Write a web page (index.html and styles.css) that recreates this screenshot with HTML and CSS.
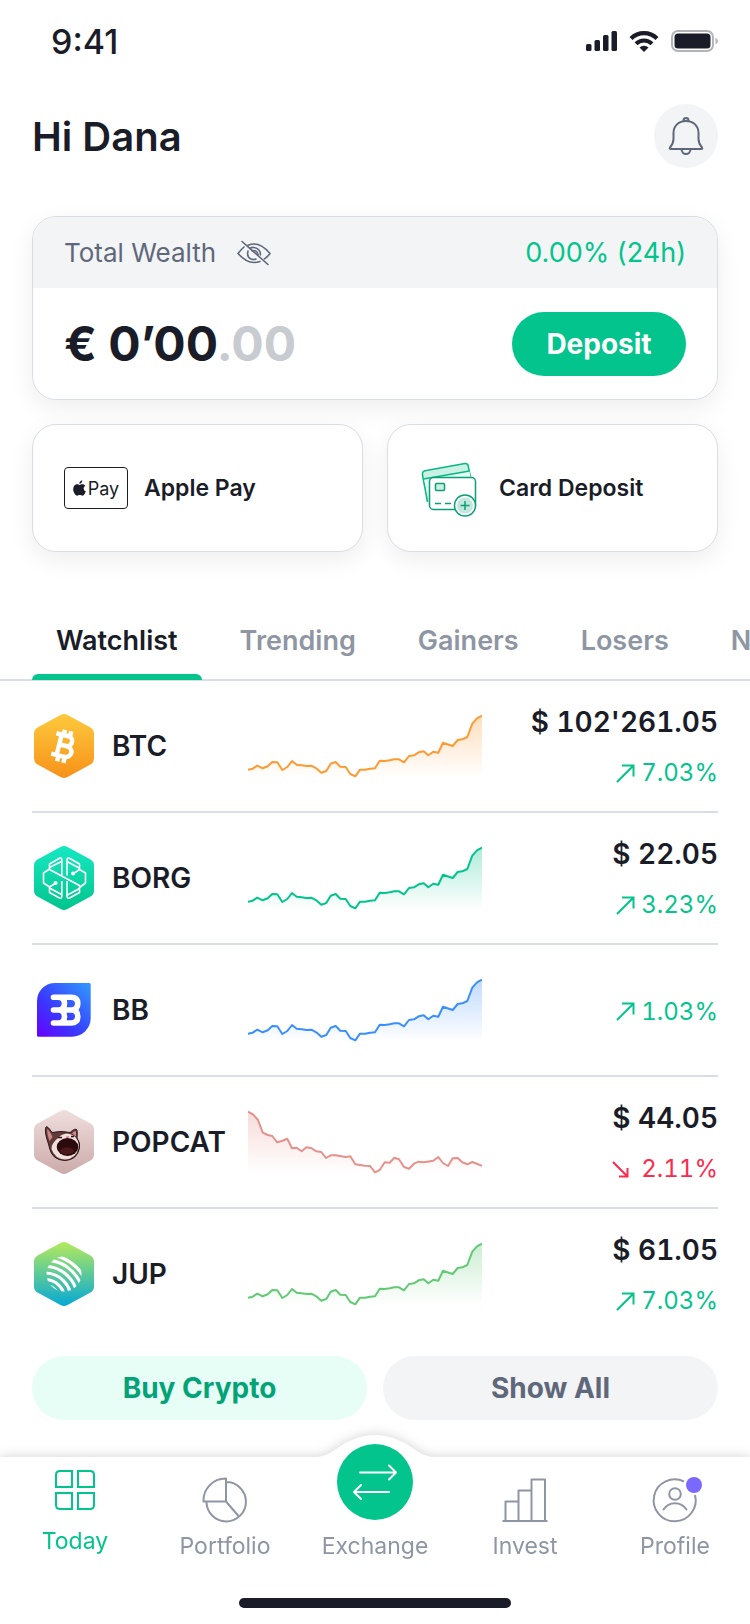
FILE: index.html
```
<!DOCTYPE html>
<html lang="en">
<head>
    <meta charset="UTF-8">
    <meta name="viewport" content="width=device-width, initial-scale=1.0">
    <title>Today</title>
    <link rel="stylesheet" href="styles.css">
</head>
<body>
    <!-- shared shapes -->
    <svg class="defs" width="0" height="0" aria-hidden="true">
        <defs>
            <path id="hex" d="M28.5 1Q32 -1 35.5 1L58.5 13.5Q62 15.5 62 19.5V44.5Q62 48.5 58.5 50.5L35.5 63Q32 65 28.5 63L5.5 50.5Q2 48.5 2 44.5V19.5Q2 15.5 5.5 13.5Z"/>
            <path id="rise-line" d="M0 55.7L4.7 54.7L9.3 51.7L14.7 54.3L19.7 52.3L24.3 48L29.3 48.3L34.3 56L39.3 53L44 47L48.7 50.7L53.7 51.3L58.3 52L63.3 51.7L68.3 54.3L73.3 58.7L78.3 57L82.7 49.7L87.7 48L92.3 52.7L97.7 53L102.3 60L107.3 62.3L112 55.7L117 55.7L122 54.7L127 54.3L131.7 46.7L136.7 47L141.7 46.3L146.3 45.3L151 45.3L156 48.3L161 42L166 41.3L170.7 38.3L175.7 37.3L180.3 41.3L185.3 37.7L190.3 38.7L195 28.7L204.7 32L209.7 26L214.3 25.3L219.3 23L224.3 9.7L229 4.3L234 1.7"/>
            <path id="rise-area" d="M0 55.7L4.7 54.7L9.3 51.7L14.7 54.3L19.7 52.3L24.3 48L29.3 48.3L34.3 56L39.3 53L44 47L48.7 50.7L53.7 51.3L58.3 52L63.3 51.7L68.3 54.3L73.3 58.7L78.3 57L82.7 49.7L87.7 48L92.3 52.7L97.7 53L102.3 60L107.3 62.3L112 55.7L117 55.7L122 54.7L127 54.3L131.7 46.7L136.7 47L141.7 46.3L146.3 45.3L151 45.3L156 48.3L161 42L166 41.3L170.7 38.3L175.7 37.3L180.3 41.3L185.3 37.7L190.3 38.7L195 28.7L204.7 32L209.7 26L214.3 25.3L219.3 23L224.3 9.7L229 4.3L234 1.7V64H0Z"/>
            <path id="arrow-up" d="M1 18L17 2M6 1.500H17.500V12.500"/>
            <linearGradient id="g-btc" x1="0" y1="0" x2="0" y2="1"><stop offset="0" stop-color="#fdc93c"/><stop offset="1" stop-color="#f7921a"/></linearGradient>
            <linearGradient id="g-borg" x1="0" y1="0" x2="0" y2="1"><stop offset="0" stop-color="#16e8c3"/><stop offset="1" stop-color="#03c48c"/></linearGradient>
            <linearGradient id="g-bb" x1="0" y1="1" x2="1" y2="0"><stop offset="0" stop-color="#6800ff"/><stop offset=".4" stop-color="#3a37ff"/><stop offset="1" stop-color="#2f9bff"/></linearGradient>
            <linearGradient id="g-cat" x1="0" y1="0" x2="0" y2="1"><stop offset="0" stop-color="#efdedd"/><stop offset="1" stop-color="#cbabaa"/></linearGradient>
            <linearGradient id="g-jup" x1="0" y1="0" x2="0" y2="1"><stop offset="0" stop-color="#b5ea5b"/><stop offset="1" stop-color="#05a9d6"/></linearGradient>
            <linearGradient id="f-orange" x1="0" y1="0" x2="0" y2="1"><stop offset="0" stop-color="#ff9a32" stop-opacity=".32"/><stop offset="1" stop-color="#ff9a32" stop-opacity="0"/></linearGradient>
            <linearGradient id="f-green" x1="0" y1="0" x2="0" y2="1"><stop offset="0" stop-color="#03c48c" stop-opacity=".32"/><stop offset="1" stop-color="#03c48c" stop-opacity="0"/></linearGradient>
            <linearGradient id="f-blue" x1="0" y1="0" x2="0" y2="1"><stop offset="0" stop-color="#3a8fff" stop-opacity=".32"/><stop offset="1" stop-color="#3a8fff" stop-opacity="0"/></linearGradient>
            <linearGradient id="f-rose" x1="0" y1="0" x2="0" y2="1"><stop offset="0" stop-color="#e5918c" stop-opacity=".32"/><stop offset="1" stop-color="#e5918c" stop-opacity="0"/></linearGradient>
            <linearGradient id="f-lime" x1="0" y1="0" x2="0" y2="1"><stop offset="0" stop-color="#62c974" stop-opacity=".32"/><stop offset="1" stop-color="#62c974" stop-opacity="0"/></linearGradient>
            <clipPath id="jup-clip"><circle cx="32" cy="32" r="17.500"/></clipPath>
        </defs>
    </svg>

    <div class="app">
        <div class="status-bar">
            <span class="time">9:41</span>
            <div class="status-icons">
                <svg width="31" height="20" viewBox="0 0 31 20" fill="#1a1d28">
                    <rect x="0" y="13" width="5.500" height="7" rx="1.500"/>
                    <rect x="8.500" y="9" width="5.500" height="11" rx="1.500"/>
                    <rect x="17" y="4" width="5.500" height="16" rx="1.500"/>
                    <rect x="25.500" y="0" width="5.500" height="20" rx="1.500"/>
                </svg>
                <svg width="30" height="21" viewBox="0 0 30 21">
                    <path d="M2 7.500A18.500 18.500 0 0 1 28 7.500" fill="none" stroke="#1a1d28" stroke-width="4.200"/>
                    <path d="M7 12.800A11.500 11.500 0 0 1 23 12.800" fill="none" stroke="#1a1d28" stroke-width="4"/>
                    <path d="M15 21L10.500 16.500A6.500 6.500 0 0 1 19.500 16.500Z" fill="#1a1d28"/>
                </svg>
                <svg width="48" height="22" viewBox="0 0 48 22">
                    <rect x="1" y="1" width="41" height="20" rx="6" fill="none" stroke="#b2b3b9" stroke-width="2"/>
                    <rect x="3.500" y="3.500" width="36" height="15" rx="3.500" fill="#1a1d28"/>
                    <path d="M44.500 7.500Q47 9 47 11T44.500 14.500Z" fill="#b2b3b9"/>
                </svg>
            </div>
        </div>

        <header class="header">
            <h1>Hi Dana</h1>
            <button class="bell" aria-label="Notifications">
                <svg width="36" height="38" viewBox="0 0 36 38" fill="none" stroke="#5f687a" stroke-width="2" stroke-linejoin="round">
                    <path d="M15.500 4.500V3.500A2.500 2.500 0 0 1 20.500 3.500V4.500"/>
                    <path d="M18 4C10.500 4 5.500 9 5.500 16V22C5.500 26 4.500 27.500 2 30.500Q1 32 3 32H33Q35 32 34 30.500C31.500 27.500 30.500 26 30.500 22V16C30.500 9 25.500 4 18 4Z"/>
                    <path d="M13.500 32C13.500 38.500 22.500 38.500 22.500 32"/>
                </svg>
            </button>
        </header>

        <section class="wealth">
            <div class="wealth-head">
                <span>Total Wealth</span>
                <button class="eye" aria-label="Show or hide balance">
                    <svg width="34" height="26" viewBox="0 0 34 26" fill="none" stroke="#5f687a" stroke-width="1.600" stroke-linecap="round">
                        <path d="M11 5.200Q14 4 17 4Q25 4 33 13.500Q31 16.500 27.500 18.800M7 7Q4 9.500 1 13.500Q9 22.500 17 22.500Q20 22.500 23 21.500"/>
                        <path d="M13 8.500Q15 7 17 7.500Q23.500 8.500 23.500 15M11 11Q9.500 17 14 19Q17 20 19 19"/>
                        <path d="M15 10.800Q20 9.500 21 14.500"/>
                        <path d="M5 1.500L31 24.500"/>
                    </svg>
                </button>
                <span class="day-change">0.00% (24h)</span>
            </div>
            <div class="wealth-body">
                <div class="balance">€ 0’00<span class="cents">.00</span></div>
                <button class="deposit">Deposit</button>
            </div>
        </section>

        <section class="actions">
            <button class="action">
                <span class="pay-badge">
                    <svg width="13" height="16" viewBox="0 0 13 16" fill="#1a1d28">
                        <path d="M9.300 0.200C9.300 2.200 8 3.700 6.300 3.800C6.200 2 7.600 0.500 9.300 0.200Z"/>
                        <path d="M6.600 4.900C7.400 4.900 8 4.200 9.500 4.200C10.700 4.200 11.700 4.900 12.300 5.700C9.900 7.200 10.300 10.300 12.800 11.300C12.200 13.200 10.900 15.600 9.400 15.700C8.400 15.700 8 15.100 6.800 15.100C5.600 15.100 5.100 15.700 4.200 15.700C2.300 15.700 0.200 12.300 0.200 9.300C0.200 6 2.200 4.300 4 4.300C5.200 4.300 6 4.900 6.600 4.900Z"/>
                    </svg>
                    Pay
                </span>
                <span>Apple Pay</span>
            </button>
            <button class="action">
                <svg width="64" height="60" viewBox="0 -4 64 60" fill="none" stroke="#0b9f78" stroke-width="1.500" stroke-linejoin="round">
                    <path d="M8.500 40L3.500 13Q3 9.500 6 8.800L46 1.500Q48.500 1.200 49.200 3.800L51.500 15" fill="#cdf0e5" stroke="#03b985"/>
                    <path d="M5 17L50.500 9L51.500 15H14Q11 15 10.500 18V40Z" fill="#e6f8f2" stroke="none"/>
                    <path d="M4.500 17L50.500 9" stroke="#03b985"/>
                    <rect x="10.500" y="15.500" width="46" height="32" rx="4" fill="#fff"/>
                    <rect x="16.500" y="21.500" width="9" height="7" rx="1" fill="#cdf0e5"/>
                    <path d="M16 41.500H22M26 41.500H32"/>
                    <circle cx="46" cy="43.500" r="10.500" fill="#fff"/>
                    <circle cx="46" cy="43.500" r="8" fill="#c3e7da" stroke="none"/>
                    <path d="M46 39V48M41.500 43.500H50.500"/>
                </svg>
                <span>Card Deposit</span>
            </button>
        </section>

        <nav class="tabs">
            <a class="tab active" href="#watchlist">Watchlist</a>
            <a class="tab" href="#trending">Trending</a>
            <a class="tab" href="#gainers">Gainers</a>
            <a class="tab" href="#losers">Losers</a>
            <a class="tab" href="#new">New</a>
        </nav>

        <ul class="coins">
            <li class="coin">
                <div class="coin-name">
                    <svg width="64" height="64" viewBox="0 0 64 64">
                        <use href="#hex" fill="url(#g-btc)"/>
                        <path transform="translate(32 32) rotate(14)" fill="none" stroke="#fff" stroke-width="4.500" d="M-10.500 -10.500H2C8.500 -10.500 8.500 -0.500 2 -0.500H-4M2 -0.500C11 -0.500 11 10.500 2 10.500H-10.500M-5 -10.500V10.500M-3 -16V-10M3.500 -16V-10M-3 10V16.500M3.500 10V16.500"/>
                    </svg>
                    BTC
                </div>
                <svg class="chart" viewBox="0 0 234 64"><use href="#rise-area" fill="url(#f-orange)"/><use href="#rise-line" stroke="#ff9a32"/></svg>
                <div class="coin-price">
                    <strong>$ 102'261.05</strong>
                    <span class="up"><svg width="19" height="19" viewBox="0 0 19 19"><use href="#arrow-up"/></svg>7.03%</span>
                </div>
            </li>
            <li class="coin">
                <div class="coin-name">
                    <svg width="64" height="64" viewBox="0 0 64 64">
                        <use href="#hex" fill="url(#g-borg)"/>
                        <g fill="none" stroke="#fff" stroke-width="1.600" stroke-linejoin="round">
                            <path d="M29.800 30V14Q29.800 11 27.500 12.300L17.500 18V23.500L47.500 39.500V46.500L37.500 52Q35 53 35 50V35"/>
                            <path d="M17.500 23L11.500 27V37L17.500 41L23 37.500M17.500 40.500V46.500L27.500 52Q29.800 53 29.800 50V35M17.500 21.500L29.500 15.500"/>
                            <path d="M35 29.500V14Q35 11 37.500 12.300L47.500 18V23.500L53.500 27V37L47.500 41.500M35 15.500L47 22M47.500 23.500L41.500 27.500M29.500 48.500L17.500 42M35.500 49L47.500 42.500"/>
                        </g>
                        <circle cx="23.500" cy="37" r="2" fill="#fff"/>
                        <circle cx="41" cy="27.500" r="2" fill="#fff"/>
                    </svg>
                    BORG
                </div>
                <svg class="chart" viewBox="0 0 234 64"><use href="#rise-area" fill="url(#f-green)"/><use href="#rise-line" stroke="#03c48c"/></svg>
                <div class="coin-price">
                    <strong>$ 22.05</strong>
                    <span class="up"><svg width="19" height="19" viewBox="0 0 19 19"><use href="#arrow-up"/></svg>3.23%</span>
                </div>
            </li>
            <li class="coin">
                <div class="coin-name">
                    <svg width="64" height="64" viewBox="0 0 64 64">
                        <path d="M23 5H57.500Q58.700 5 58.700 6.500V40A18.700 18.700 0 0 1 40 58.700H6.500Q5 58.700 5 57.500V23A18 18 0 0 1 23 5Z" fill="url(#g-bb)"/>
                        <path d="M21.500 19.200H39Q45.800 19.200 45.800 25.500T39.500 32H21.500M39.500 32Q45.800 32 45.800 38.500T39 45H21.500M26.500 19.200Q32.500 19.200 32.500 25.500T26.500 32Q32.500 32 32.500 38.500T26.500 45" fill="none" stroke="#fff" stroke-width="5.600" stroke-linecap="round"/>
                    </svg>
                    BB
                </div>
                <svg class="chart" viewBox="0 0 234 64"><use href="#rise-area" fill="url(#f-blue)"/><use href="#rise-line" stroke="#3a8fff"/></svg>
                <div class="coin-price">
                    <span class="up"><svg width="19" height="19" viewBox="0 0 19 19"><use href="#arrow-up"/></svg>1.03%</span>
                </div>
            </li>
            <li class="coin">
                <div class="coin-name">
                    <svg width="64" height="64" viewBox="0 0 64 64">
                        <use href="#hex" fill="url(#g-cat)"/>
                        <path d="M16.500 34C14 27 12.500 20 14 17Q15.500 15.500 20 22.500Q29 20.500 38 22.500Q43.500 17.500 45 20Q45.500 24 45 28Q48.500 33 47.500 38Q45 50 33 50.500Q20 50 17.500 38Z" fill="#63393a" stroke="#2c1718" stroke-width="1"/>
                        <path d="M15 19Q18 21 20.500 27L17.500 31Q15 24 15 19Z" fill="#cf8686"/>
                        <path d="M40 23.500Q43.500 20 44 21.500V26.500Z" fill="#cf8686"/>
                        <path d="M26 28Q29 24 35 23.500Q41 24 44 28Q47.500 33 46.500 38Q44 49 33 49.500Q23 49 19.500 39Q19 34 26 28Z" fill="#f1dfdc"/>
                        <path d="M26 27.500H30M39 26.500H42" stroke="#241516" stroke-width="1.600"/>
                        <path d="M33.500 27L37 26L36 29Z" fill="#c8706f"/>
                        <ellipse cx="35.500" cy="37" rx="10.800" ry="9" fill="#2a0a0c"/>
                        <ellipse cx="35" cy="41" rx="7" ry="3.500" fill="#4a1a1b"/>
                    </svg>
                    POPCAT
                </div>
                <svg class="chart" viewBox="0 0 234 64">
                    <path fill="url(#f-rose)" d="M0 1.700L5.300 4.700L10 10L14.700 22.700L19.700 25L24.300 26L29.300 32.300L34.300 30.700L39.300 28.700L44 38.300L48.700 37.700L53.700 41.300L58.300 37.300L63.300 38L68.300 41.300L73.300 42L78 48L82.700 45.300L87.700 45.300L97.700 47L102.300 46.300L107.300 54.300L117 55.700L122 56L127 62.300L131.700 60L136.700 52.300L141.700 52.700L146.300 47.700L151 49.300L156 57L161 58.700L166 53.700L170.700 51.700L175.700 52.300L185.300 50.700L190.300 47L195 53L200 56L204.700 48.300L209.700 48L214.300 52.300L219.300 54.300L224.300 52L234 55.700V64H0Z"/>
                    <path stroke="#e5918c" d="M0 1.700L5.300 4.700L10 10L14.700 22.700L19.700 25L24.300 26L29.300 32.300L34.300 30.700L39.300 28.700L44 38.300L48.700 37.700L53.700 41.300L58.300 37.300L63.300 38L68.300 41.300L73.300 42L78 48L82.700 45.300L87.700 45.300L97.700 47L102.300 46.300L107.300 54.300L117 55.700L122 56L127 62.300L131.700 60L136.700 52.300L141.700 52.700L146.300 47.700L151 49.300L156 57L161 58.700L166 53.700L170.700 51.700L175.700 52.300L185.300 50.700L190.300 47L195 53L200 56L204.700 48.300L209.700 48L214.300 52.300L219.300 54.300L224.300 52L234 55.700"/>
                </svg>
                <div class="coin-price">
                    <strong>$ 44.05</strong>
                    <span class="down"><svg width="17" height="17" viewBox="0 0 17 17"><path d="M1 1L15 15M7 15.500H15.500V7"/></svg>2.11%</span>
                </div>
            </li>
            <li class="coin">
                <div class="coin-name">
                    <svg width="64" height="64" viewBox="0 0 64 64">
                        <use href="#hex" fill="url(#g-jup)"/>
                        <g clip-path="url(#jup-clip)" fill="none" stroke="#fff" stroke-width="3.200">
                            <circle cx="13" cy="57" r="13.500"/>
                            <circle cx="13" cy="57" r="19.500"/>
                            <circle cx="13" cy="57" r="26"/>
                            <circle cx="13" cy="57" r="32.500"/>
                            <circle cx="13" cy="57" r="38.800"/>
                            <circle cx="13" cy="57" r="44.600"/>
                        </g>
                    </svg>
                    JUP
                </div>
                <svg class="chart" viewBox="0 0 234 64"><use href="#rise-area" fill="url(#f-lime)"/><use href="#rise-line" stroke="#62c974"/></svg>
                <div class="coin-price">
                    <strong>$ 61.05</strong>
                    <span class="up"><svg width="19" height="19" viewBox="0 0 19 19"><use href="#arrow-up"/></svg>7.03%</span>
                </div>
            </li>
        </ul>

        <div class="buttons">
            <button class="buy">Buy Crypto</button>
            <button class="show-all">Show All</button>
        </div>

        <nav class="bottom-nav">
            <svg class="bump" width="120" height="24" viewBox="0 0 120 24"><path d="M0 22C12 22 19 15 27 10C37 4 48 0 60 0C72 0 83 4 93 10C101 15 108 22 120 22V24H0Z" fill="#fff"/></svg>
            <div class="nav-items">
                <a class="nav-item current" href="#today">
                    <svg width="46" height="40" viewBox="0 0 46 40" fill="none" stroke="currentColor" stroke-width="2">
                        <path d="M20 1V17H4V5Q4 1 8 1ZM26 1H38Q42 1 42 5V17H26ZM4 23H20V39H8Q4 39 4 35ZM26 23H42V35Q42 39 38 39H26Z"/>
                    </svg>
                    Today
                </a>
                <a class="nav-item" href="#portfolio">
                    <svg width="46" height="46" viewBox="0 0 46 46" fill="none" stroke="currentColor" stroke-width="2" stroke-linejoin="round">
                        <path d="M24 1.500V24.500H1.500A22 22 0 0 1 24 1.500ZM24 5A19.700 19.700 0 1 1 4.500 24.500M24 24.500L36.500 39"/>
                    </svg>
                    Portfolio
                </a>
                <a class="nav-item" href="#exchange">
                    <span class="exchange-circle">
                        <svg width="46" height="36" viewBox="0 0 46 36" fill="none" stroke="#fff" stroke-width="2" stroke-linecap="round" stroke-linejoin="round">
                            <path d="M8 8.500H44M37 1.500L44 8.500L37 15.500M37 28H2M9 21L2 28L9 35"/>
                        </svg>
                    </span>
                    Exchange
                </a>
                <a class="nav-item" href="#invest">
                    <svg width="46" height="46" viewBox="0 0 46 46" fill="none" stroke="currentColor" stroke-width="2" stroke-linejoin="round">
                        <path d="M0.500 44H45.500M3.500 44V24.500H16.500M16.500 44V13.500H29.500M29.500 44V2.500H43V44"/>
                    </svg>
                    Invest
                </a>
                <a class="nav-item" href="#profile">
                    <svg class="profile-icon" width="50" height="46" viewBox="0 0 50 46" fill="none" stroke="currentColor" stroke-width="2">
                        <path d="M34 4.500A21 21 0 1 0 45 18" />
                        <circle cx="25" cy="17" r="5.800"/>
                        <path d="M13.500 32.500C19 24 31 24 36.500 32.500" stroke-linecap="round"/>
                        <circle cx="44" cy="8" r="8" fill="#7b68ff" stroke="none"/>
                    </svg>
                    Profile
                </a>
            </div>
            <div class="home-indicator"></div>
        </nav>
    </div>
</body>
</html>
```
FILE: styles.css
```
* {
    box-sizing: border-box;
}

body {
    margin: 0;
    font-family: Inter, "Liberation Sans", sans-serif;
    font-size: 28px;
    color: #1a1d28;
    background-color: #fff;
}

button {
    font-family: inherit;
    color: inherit;
    border: none;
    padding: 0;
    cursor: pointer;
}

a {
    text-decoration: none;
    color: inherit;
}

svg {
    display: block;
    flex: none;
}

.defs {
    position: absolute;
}

.app {
    min-height: 100vh;
    display: flex;
    flex-direction: column;
    overflow: hidden;
}

.status-bar {
    display: flex;
    justify-content: space-between;
    align-items: center;
    height: 44px;
    margin: 19px 31px 0 51px;
}

.time {
    font-size: 34px;
    font-weight: 500;
}

.status-icons {
    display: flex;
    align-items: center;
    gap: 12px;
}

.header {
    display: flex;
    justify-content: space-between;
    align-items: center;
    margin: 41px 32px 48px;
}

h1 {
    margin: 0;
    font-size: 40px;
    font-weight: 600;
}

.bell {
    display: flex;
    justify-content: center;
    align-items: center;
    width: 64px;
    height: 64px;
    border-radius: 50%;
    background-color: #f3f4f6;
}

.wealth {
    margin: 0 32px;
    border: 1px solid #d9dde4;
    border-radius: 24px;
    overflow: hidden;
    box-shadow: 0 8px 24px rgba(0, 0, 0, 0.07);
}

.wealth-head {
    display: flex;
    align-items: center;
    height: 71px;
    padding: 0 31px;
    background-color: #f3f4f6;
    color: #5f687a;
    font-size: 26px;
}

.eye {
    margin-left: 21px;
    background: none;
}

.day-change {
    margin-left: auto;
    font-size: 27px;
    color: #03c48c;
}

.wealth-body {
    display: flex;
    justify-content: space-between;
    align-items: center;
    height: 111px;
    padding: 0 31px;
}

.balance {
    font-size: 48px;
    font-weight: 700;
}

.cents {
    color: #c8cbd0;
}

.deposit {
    width: 174px;
    height: 64px;
    border-radius: 32px;
    background-color: #03c48c;
    color: #fff;
    font-size: 28px;
    font-weight: 700;
}

.actions {
    display: grid;
    grid-template-columns: 1fr 1fr;
    gap: 24px;
    margin: 24px 32px 0;
}

.action {
    display: flex;
    align-items: center;
    gap: 16px;
    height: 128px;
    padding: 0 31px;
    border: 1px solid #d9dde4;
    border-radius: 24px;
    background-color: #fff;
    box-shadow: 0 8px 24px rgba(0, 0, 0, 0.07);
    font-size: 23px;
    font-weight: 600;
}

.pay-badge {
    display: flex;
    justify-content: center;
    align-items: center;
    gap: 2px;
    width: 64px;
    height: 42px;
    border: 1px solid #1a1d28;
    border-radius: 4px;
    font-size: 18px;
    font-weight: 400;
}

.tabs {
    display: flex;
    gap: 14px;
    margin-top: 48px;
    padding-left: 32px;
    border-bottom: 2px solid #d9dde4;
}

.tab {
    position: relative;
    padding: 3px 24px 0;
    font-size: 27px;
    line-height: 76px;
    font-weight: 600;
    color: #8f96a3;
    white-space: nowrap;
}

.tab.active {
    color: #1a1d28;
}

.tab.active::after {
    content: "";
    position: absolute;
    left: 0;
    right: 0;
    bottom: -1px;
    height: 6px;
    border-radius: 6px 6px 0 0;
    background-color: #03c48c;
}

.coins {
    margin: 0 32px;
    padding: 0;
    list-style: none;
}

.coin {
    display: grid;
    grid-template-columns: 216px minmax(0, 234px) 1fr;
    align-items: center;
    min-height: 132px;
    border-bottom: 2px solid #d9dde4;
}

.coin:last-child {
    min-height: 130px;
    border-bottom: none;
}

.coin-name {
    display: flex;
    align-items: center;
    gap: 16px;
    font-weight: 600;
}

.chart {
    width: 100%;
    fill: none;
    stroke-width: 2;
    stroke-linejoin: round;
}

.coin-price {
    display: flex;
    flex-direction: column;
    align-items: flex-end;
    gap: 17px;
    padding-top: 3px;
    line-height: 34px;
    font-variant-numeric: tabular-nums;
}

.coin-price strong {
    font-weight: 600;
}

.up,
.down {
    display: flex;
    align-items: center;
    gap: 6px;
    font-size: 24px;
    color: #03c48c;
}

.down {
    gap: 12px;
    color: #ff294d;
}

.up svg,
.down svg {
    fill: none;
    stroke: currentColor;
    stroke-width: 2;
}

.buttons {
    display: grid;
    grid-template-columns: 1fr 1fr;
    gap: 16px;
    margin: 17px 32px 32px;
}

.buttons button {
    height: 64px;
    border-radius: 32px;
    font-size: 28px;
    font-weight: 700;
}

.buttons .buy {
    background-color: #e7fef6;
    color: #03a377;
}

.buttons .show-all {
    background-color: #f3f4f6;
    color: #5f687a;
}

.bottom-nav {
    position: relative;
    margin-top: auto;
    background-color: #fff;
    filter: drop-shadow(0 0 6px rgba(0, 0, 0, 0.18));
}

.bump {
    position: absolute;
    left: 50%;
    top: -22px;
    margin-left: -60px;
}

.nav-items {
    position: relative;
    display: grid;
    grid-template-columns: repeat(5, 1fr);
    height: 103px;
}

.nav-item {
    display: flex;
    flex-direction: column;
    align-items: center;
    justify-content: flex-end;
    gap: 9px;
    font-size: 23px;
    line-height: 28px;
    color: #8f96a3;
}

.current {
    justify-content: flex-start;
    gap: 17px;
    padding-top: 13px;
    color: #03c48c;
}

/* rises out of the bar into the bump */
.exchange-circle {
    display: flex;
    justify-content: center;
    align-items: center;
    width: 76px;
    height: 76px;
    margin: -24px 0 3px;
    border-radius: 50%;
    background-color: #03c48c;
}

.profile-icon {
    overflow: visible;
}

.home-indicator {
    width: 272px;
    height: 10px;
    margin: 38px auto 16px;
    border-radius: 5px;
    background-color: #1a1d28;
}
```
